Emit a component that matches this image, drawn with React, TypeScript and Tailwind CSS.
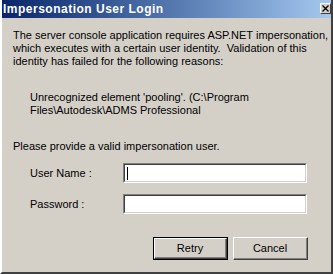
import React from 'react';

// Classic Windows dialog: "Impersonation User Login"

const font = { fontFamily: '"Liberation Sans", Arial, sans-serif' };

const TextBox: React.FC<{ caret?: boolean }> = ({ caret }) => (
    <div className="h-[20px] w-[184px] border-t border-l border-b border-r border-t-[#808080] border-l-[#808080] border-b-white border-r-white">
        <div className="h-full w-full bg-white border-t border-l border-b border-r border-t-[#404040] border-l-[#404040] border-b-[#d4d0c8] border-r-[#d4d0c8] flex items-center pl-[2px]">
            {caret && <div className="w-px h-[13px] bg-black" />}
        </div>
    </div>
);

const Button: React.FC<{ label: string; isDefault?: boolean }> = ({ label, isDefault }) => (
    <div className={isDefault ? 'border border-black' : ''}>
        <div className={`${isDefault ? 'h-[21px] w-[73px]' : 'h-[23px] w-[75px]'} border-t border-l border-b border-r border-t-white border-l-white border-b-[#404040] border-r-[#404040]`}>
            <div className="h-full w-full border-b border-r border-b-[#808080] border-r-[#808080] flex items-center justify-center text-[11px] text-black">
                {label}
            </div>
        </div>
    </div>
);

export default function App() {
    return (
        <div style={font} className="w-[333px] h-[274px] bg-[#d4d0c8] text-[11px] leading-[13px] text-black flex flex-col border-l-2 border-l-white border-r-2 border-r-[#404040] border-b-2 border-b-[#404040] overflow-hidden">
            {/* Title bar */}
            <div className="h-[18px] flex items-center justify-between bg-gradient-to-r from-[#0a246a] to-[#a6caf0] pl-[3px] pr-[2px] -ml-[2px] -mr-[2px]">
                <span className="text-white font-bold text-[12px] tracking-[0.5px]">Impersonation User Login</span>
                <div className="w-[11px] h-[11px] bg-[#d4d0c8] border border-t-white border-l-white border-b-[#404040] border-r-[#404040] flex items-center justify-center mb-[1px]">
                    <svg width="7" height="7" viewBox="0 0 7 7">
                        <path d="M0.5 0.5 L6.5 6.5 M6.5 0.5 L0.5 6.5" stroke="black" strokeWidth="1.3" />
                    </svg>
                </div>
            </div>

            <div className="pl-[11px] pr-[4px] flex flex-col whitespace-nowrap">
                <p className="mt-[11px]">
                    The server console application requires ASP.NET impersonation,<br />
                    which executes with a certain user identity.&nbsp; Validation of this<br />
                    identity has failed for the following reasons:
                </p>
                <p className="mt-[23px] pl-[17px]">
                    Unrecognized element 'pooling'. (C:\Program<br />
                    Files\Autodesk\ADMS Professional
                </p>
                <p className="mt-[23px]">Please provide a valid impersonation user.</p>

                <div className="mt-[10px] grid grid-cols-[93px_184px] items-center gap-y-[11px] pl-[17px]">
                    <span>User Name :</span>
                    <TextBox caret />
                    <span>Password :</span>
                    <TextBox />
                </div>

                <div className="mt-[23px] flex justify-end gap-[5px] pr-[19px]">
                    <Button label="Retry" isDefault />
                    <Button label="Cancel" />
                </div>
            </div>
        </div>
    );
}
